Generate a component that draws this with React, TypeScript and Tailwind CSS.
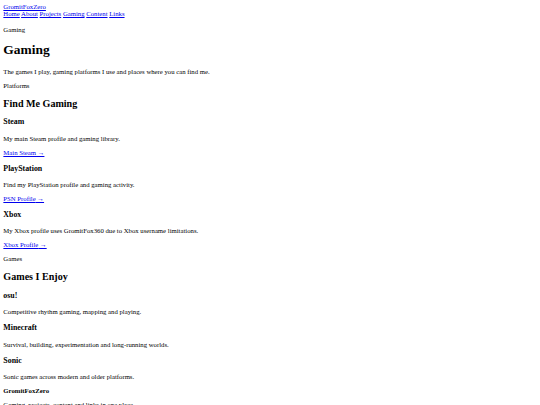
import React from 'react'

// Plain, unstyled document look, scaled down (base ~6.72px Times)
const link = 'text-[#0000ee] underline'

function Platform({ name, text, href }: { name: string; text: string; href: string }) {
  return (
    <section>
      <h3 className="my-[8.2px] text-[7.86px] font-bold leading-[normal]">{name}</h3>
      <p className="my-[7.05px]">{text}</p>
      <p className="my-[7.05px]">
        <a className={link}>{href} →</a>
      </p>
    </section>
  )
}

function Game({ name, text }: { name: string; text: string }) {
  return (
    <section>
      <h3 className="my-[8.2px] text-[7.86px] font-bold leading-[normal]">{name}</h3>
      <p className="my-[7.05px]">{text}</p>
    </section>
  )
}

export default function App() {
  return (
    <div className="min-h-[405px] bg-white p-[3.36px] font-['Liberation_Serif',serif] text-[6.72px] leading-[normal] text-black">
      <header>
        <a className={`${link} block`}>GromitFoxZero</a>
        <nav>
          <a className={link}>Home</a> <a className={link}>About</a> <a className={link}>Projects</a>{' '}
          <a className={link}>Gaming</a> <a className={link}>Content</a> <a className={link}>Links</a>
        </nav>
      </header>

      <main className="pt-[1.5px]">
        <p className="my-[7.05px]">Gaming</p>
        <h1 className="my-[9.4px] text-[13.44px] font-bold leading-[normal]">Gaming</h1>
        <p className="my-[7.05px]">The games I play, gaming platforms I use and places where you can find me.</p>

        <p className="my-[7.05px]">Platforms</p>
        <h2 className="my-[8.8px] text-[10.08px] font-bold leading-[normal]">Find Me Gaming</h2>
        <Platform name="Steam" text="My main Steam profile and gaming library." href="Main Steam" />
        <Platform name="PlayStation" text="Find my PlayStation profile and gaming activity." href="PSN Profile" />
        <Platform
          name="Xbox"
          text="My Xbox profile uses GromitFox360 due to Xbox username limitations."
          href="Xbox Profile"
        />

        <p className="my-[7.05px]">Games</p>
        <h2 className="my-[8.8px] text-[10.08px] font-bold leading-[normal]">Games I Enjoy</h2>
        <Game name="osu!" text="Competitive rhythm gaming, mapping and playing." />
        <Game name="Minecraft" text="Survival, building, experimentation and long-running worlds." />
        <Game name="Sonic" text="Sonic games across modern and older platforms." />
      </main>

      <footer>
        <p className="my-[7.05px] font-bold">GromitFoxZero</p>
        <p className="my-[7.05px]">Gaming, projects, content and links in one place.</p>
      </footer>
    </div>
  )
}
